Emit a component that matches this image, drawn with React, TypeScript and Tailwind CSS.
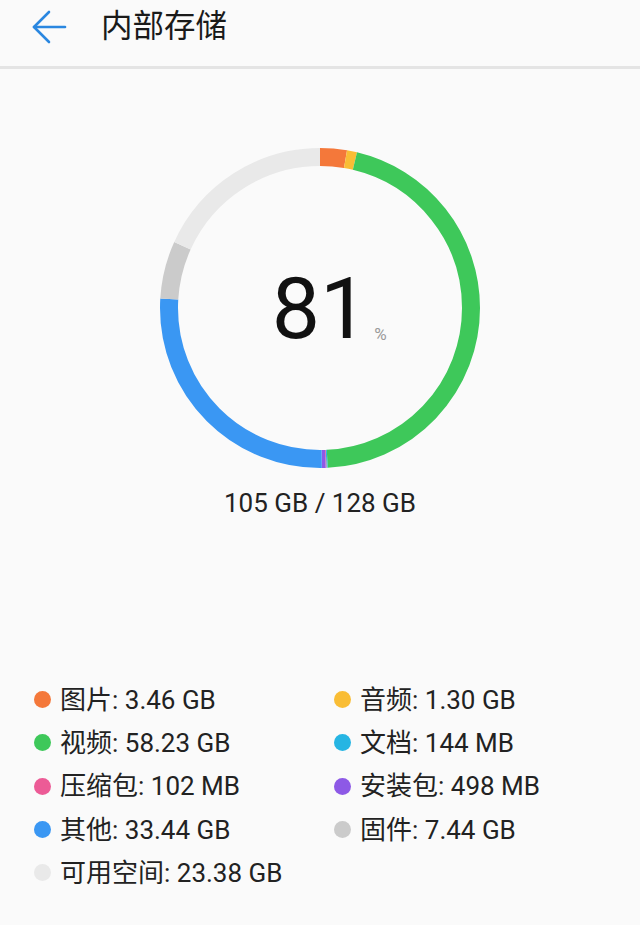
type Item = { label: string; value: string; color: string };

// 按环形图顺序（从12点顺时针）
const ring: { gb: number; color: string }[] = [
  { gb: 3.46, color: "#f4783a" },
  { gb: 1.3, color: "#f9bd35" },
  { gb: 58.23, color: "#3ec85a" },
  { gb: 0.144, color: "#26b5e3" },
  { gb: 0.102, color: "#ec5b96" },
  { gb: 0.498, color: "#8d59e6" },
  { gb: 33.44, color: "#3a97f3" },
  { gb: 7.44, color: "#cbcbcb" },
  { gb: 23.38, color: "#e9e9e9" },
];

const legend: Item[] = [
  { label: "图片", value: "3.46 GB", color: "#f4783a" },
  { label: "音频", value: "1.30 GB", color: "#f9bd35" },
  { label: "视频", value: "58.23 GB", color: "#3ec85a" },
  { label: "文档", value: "144 MB", color: "#26b5e3" },
  { label: "压缩包", value: "102 MB", color: "#ec5b96" },
  { label: "安装包", value: "498 MB", color: "#8d59e6" },
  { label: "其他", value: "33.44 GB", color: "#3a97f3" },
  { label: "固件", value: "7.44 GB", color: "#cbcbcb" },
  { label: "可用空间", value: "23.38 GB", color: "#e9e9e9" },
];

function Ring() {
  const r = 151;
  const c = 2 * Math.PI * r;
  const total = ring.reduce((s, x) => s + x.gb, 0);
  let acc = 0;
  return (
    <svg width="320" height="320" viewBox="0 0 320 320" className="-rotate-90">
      {ring.map((seg, i) => {
        const len = (seg.gb / total) * c;
        const el = (
          <circle
            key={i}
            cx="160"
            cy="160"
            r={r}
            fill="none"
            stroke={seg.color}
            strokeWidth="18"
            strokeDasharray={`${len} ${c - len}`}
            strokeDashoffset={-acc}
          />
        );
        acc += len;
        return el;
      })}
    </svg>
  );
}

function BackArrow() {
  return (
    <svg width="36" height="36" viewBox="0 0 36 36" fill="none" stroke="#2a87e0" strokeWidth="2.6" strokeLinecap="round" strokeLinejoin="round">
      <path d="M34 18H3" />
      <path d="M18 3L3 18l15 15" />
    </svg>
  );
}

export default function App() {
  return (
    <div
      className="min-h-[925px] w-[640px] bg-[#fafafa] text-[#202020]"
      style={{ fontFamily: "Roboto, 'Noto Sans CJK SC', sans-serif" }}
    >
      <header className="flex h-[69px] items-center border-b-[3px] border-[#e4e4e4] pb-[12px]">
        <div className="ml-[31px]">
          <BackArrow />
        </div>
        <h1 className="ml-[34px] text-[31.5px] leading-none text-[#1a1a1a]">内部存储</h1>
      </header>

      <div className="mt-[79px] flex justify-center">
        <div className="relative h-[320px] w-[320px]">
          <Ring />
          <div className="absolute inset-0 flex items-center justify-center">
            <span className="relative mt-[2px] text-[86px] font-normal leading-none text-[#111]">
              81
              <span className="absolute bottom-[9px] left-full ml-[6px] text-[17px] font-normal leading-none text-[#9a9a9a]">%</span>
            </span>
          </div>
        </div>
      </div>

      <p className="mt-[19px] text-center text-[26px] leading-[32px] text-[#222]">105 GB / 128 GB</p>

      <div className="mt-[159px] grid grid-cols-[300px_300px] pl-[34px]">
        {legend.map((it) => (
          <div key={it.label} className="flex h-[43.3px] items-center">
            <span className="h-[17px] w-[17px] shrink-0 rounded-full" style={{ backgroundColor: it.color }} />
            <span className="ml-[9px] text-[26px] leading-none text-[#222]">
              {it.label}: {it.value}
            </span>
          </div>
        ))}
      </div>
    </div>
  );
}
